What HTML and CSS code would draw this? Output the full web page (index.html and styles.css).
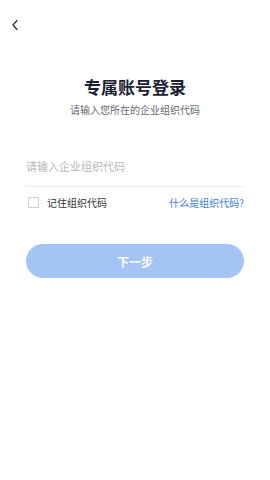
FILE: index.html
```html
<!DOCTYPE html>
<html lang="zh-CN">
<head>
    <meta charset="UTF-8">
    <meta name="viewport" content="width=device-width, initial-scale=1.0">
    <title>专属账号登录</title>
    <link rel="stylesheet" href="styles.css">
</head>
<body>
    <div class="page">
        <!-- Top bar -->
        <div class="top-bar">
            <svg class="back-icon" width="8" height="12" viewBox="0 0 8 12">
                <path d="M6 1.5 L2 6 L6 10.5" fill="none" stroke="#333" stroke-width="1.3" stroke-linecap="round" stroke-linejoin="round"/>
            </svg>
        </div>

        <!-- Heading -->
        <div class="heading">
            <h1>专属账号登录</h1>
            <p class="subtitle">请输入您所在的企业组织代码</p>
        </div>

        <!-- Form -->
        <div class="form">
            <input type="text" class="code-input" placeholder="请输入企业组织代码">
            <div class="options">
                <label class="remember">
                    <span class="checkbox"></span>
                    记住组织代码
                </label>
                <a class="help-link">什么是组织代码?</a>
            </div>
            <button class="next-button">下一步</button>
        </div>
    </div>
</body>
</html>
```

FILE: styles.css
```css
body {
    margin: 0;
    background-color: #fff;
    font-family: "Noto Sans CJK SC", "Noto Sans", sans-serif;
}
.page {
    width: 270px;
    height: 480px;
    display: flex;
    flex-direction: column;
}
.top-bar {
    height: 50px;
    padding-left: 11px;
    display: flex;
    align-items: center;
}
.back-icon {
    display: block;
}
.heading {
    text-align: center;
    margin-top: 25px;
}
h1 {
    margin: 0;
    font-size: 17px;
    line-height: 24px;
    font-weight: 700;
    color: #1b2033;
}
.subtitle {
    margin: 4px 0 0;
    font-size: 10px;
    line-height: 14px;
    color: #666a73;
}
.form {
    margin: 35px 26px 0;
    display: flex;
    flex-direction: column;
}
.code-input {
    height: 28px;
    padding: 0 0 6px;
    border: none;
    border-bottom: 1px solid #ededed;
    font-family: inherit;
    font-size: 11px;
    outline: none;
    background: transparent;
}
.code-input::placeholder {
    color: #b8b8b8;
}
.options {
    display: flex;
    justify-content: space-between;
    align-items: center;
    margin-top: 7px;
    height: 16px;
}
.remember {
    display: flex;
    align-items: center;
    font-size: 10px;
    color: #333;
    margin-left: 2px;
}
.checkbox {
    width: 9px;
    height: 9px;
    border: 1px solid #cfcfcf;
    margin-right: 8px;
}
.help-link {
    font-size: 10px;
    color: #3b7ddf;
}
.next-button {
    margin-top: 34px;
    height: 34px;
    border: none;
    border-radius: 17px;
    background-color: #a3c4f4;
    color: #fff;
    font-family: inherit;
    font-size: 12px;
    font-weight: 700;
}
```
